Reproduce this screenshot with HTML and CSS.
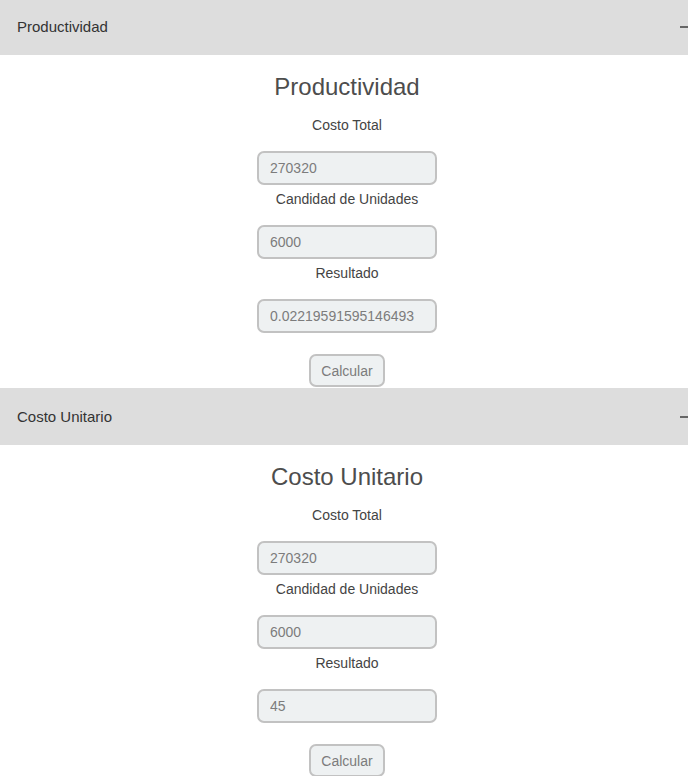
FILE: index.html
```html
<!DOCTYPE html>
<html lang="es">
<head>
<meta charset="utf-8">
<title>Calculadora</title>
<link rel="stylesheet" href="styles.css">
</head>
<body>
<div class="page">
  <div class="panel-header">
    <span class="panel-title">Productividad</span>
    <span class="collapse-icon"></span>
  </div>
  <section class="panel-body">
    <h2 class="calc-title">Productividad</h2>
    <label class="field-label">Costo Total</label>
    <input class="field-input" type="text" value="270320">
    <label class="field-label">Candidad de Unidades</label>
    <input class="field-input" type="text" value="6000">
    <label class="field-label">Resultado</label>
    <input class="field-input" type="text" value="0.02219591595146493">
    <button class="calc-btn" type="button">Calcular</button>
  </section>
  <div class="panel-header">
    <span class="panel-title">Costo Unitario</span>
    <span class="collapse-icon"></span>
  </div>
  <section class="panel-body">
    <h2 class="calc-title">Costo Unitario</h2>
    <label class="field-label">Costo Total</label>
    <input class="field-input" type="text" value="270320">
    <label class="field-label">Candidad de Unidades</label>
    <input class="field-input" type="text" value="6000">
    <label class="field-label">Resultado</label>
    <input class="field-input" type="text" value="45">
    <button class="calc-btn" type="button">Calcular</button>
  </section>
</div>
</body>
</html>
```
FILE: styles.css
```css
html, body {
  margin: 0;
  padding: 0;
  overflow: hidden;
  background: #ffffff;
}

body {
  font-family: "Liberation Sans", Arial, sans-serif;
  color: #333333;
}

.page {
  width: 694px;
  margin-top: -2px;
}

.panel-header {
  height: 57px;
  background: #dddddd;
  display: flex;
  align-items: center;
  justify-content: space-between;
  padding: 0 4px 0 17px;
  box-sizing: border-box;
}

.panel-title {
  font-size: 15px;
  color: #333333;
}

.collapse-icon {
  width: 10px;
  height: 2px;
  background: #666666;
  margin-top: 1px;
}

.panel-body {
  display: flex;
  flex-direction: column;
  align-items: center;
  padding: 18px 0 1px;
}

.calc-title {
  margin: 0 0 14px;
  font-size: 24px;
  line-height: 28px;
  font-weight: normal;
  color: #4d4d4d;
}

.field-label {
  display: block;
  font-size: 14px;
  line-height: 20px;
  color: #444444;
  margin-bottom: 16px;
}

.field-input {
  display: block;
  box-sizing: border-box;
  width: 180px;
  height: 34px;
  margin: 0 0 4px;
  padding: 0 11px;
  border: 2px solid #c2c2c2;
  border-radius: 7px;
  background: #eef1f2;
  font-family: "Liberation Sans", Arial, sans-serif;
  font-size: 14px;
  color: #7c7c7c;
  outline: none;
}

.calc-btn {
  margin-top: 17px;
  box-sizing: border-box;
  height: 33px;
  padding: 0 10px;
  border: 2px solid #c2c2c2;
  border-radius: 7px;
  background: #eef1f2;
  font-family: "Liberation Sans", Arial, sans-serif;
  font-size: 14px;
  color: #7c7c7c;
}
```
